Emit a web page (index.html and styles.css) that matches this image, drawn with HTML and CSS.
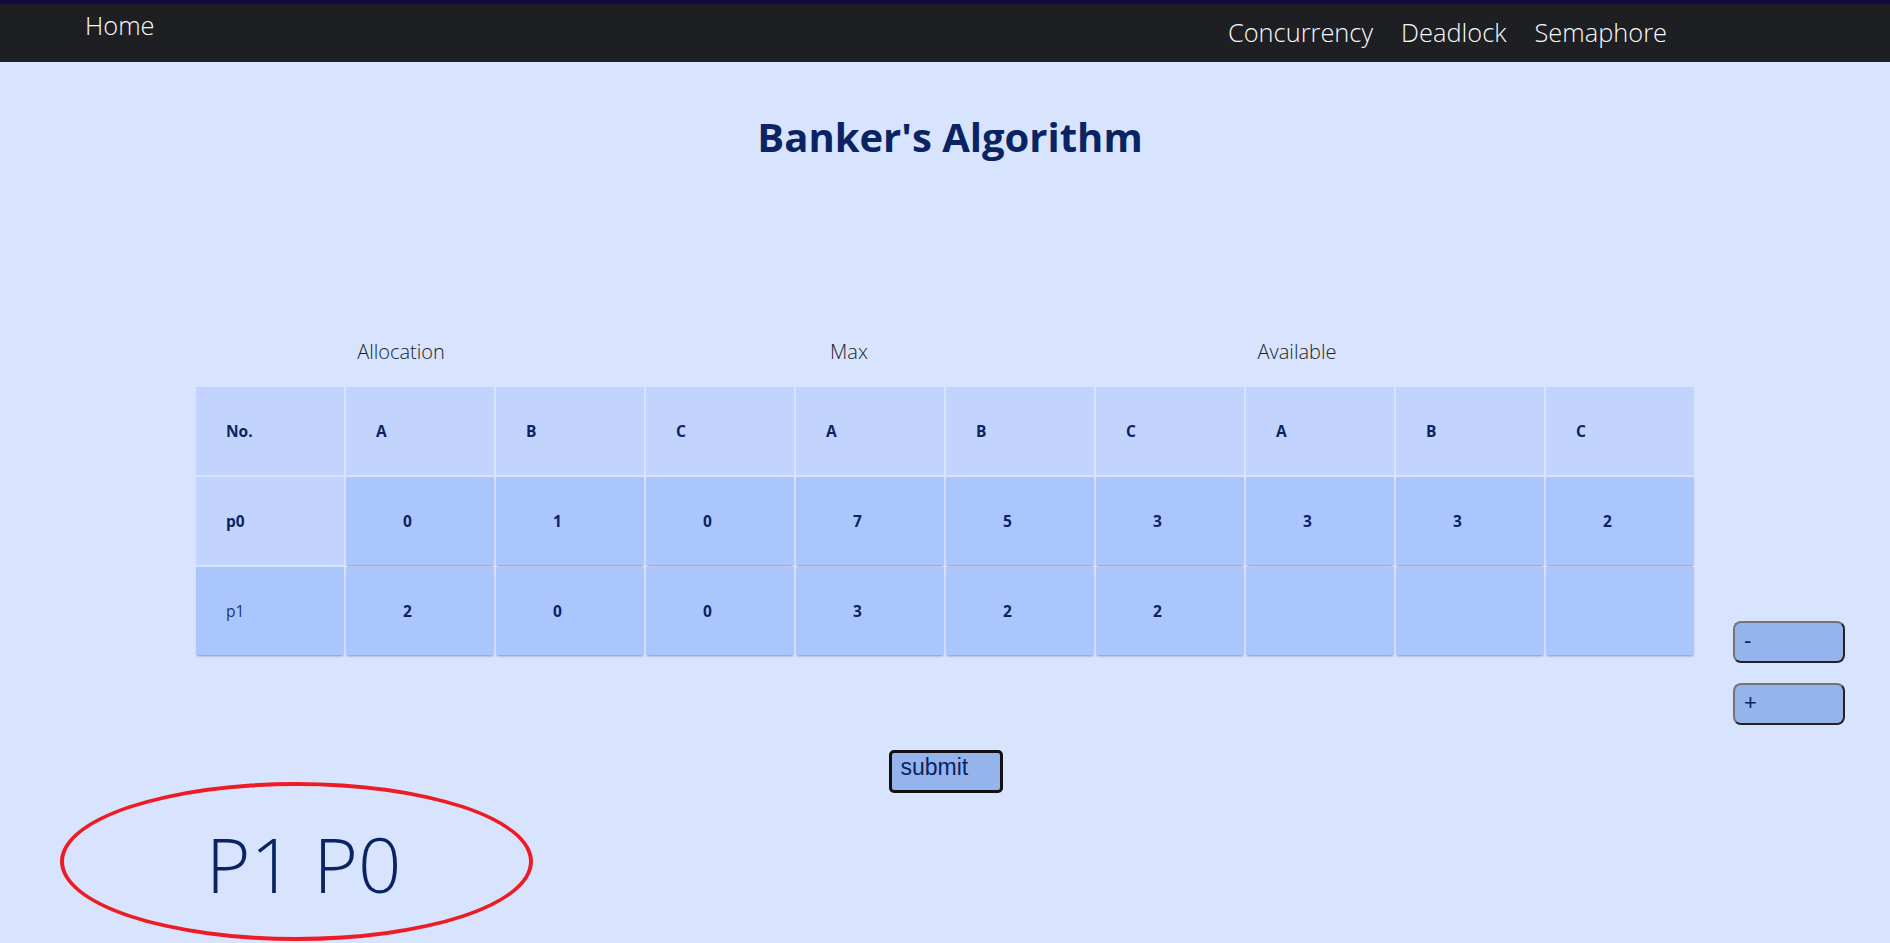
FILE: index.html
```html
<!DOCTYPE html>
<html lang="en">
<head>
<meta charset="utf-8">
<title>Banker's Algorithm</title>
<link rel="stylesheet" href="styles.css">
</head>
<body>
<nav class="navbar">
  <a class="nav-home" href="#">Home</a>
  <div class="nav-links">
    <a href="#">Concurrency</a>
    <a href="#">Deadlock</a>
    <a href="#">Semaphore</a>
  </div>
</nav>

<main>
  <h1 class="title">Banker's Algorithm</h1>

  <div class="group-labels">
    <span>Allocation</span>
    <span>Max</span>
    <span>Available</span>
  </div>

  <div class="table-area">
    <table class="matrix">
      <tr class="head-row">
        <th>No.</th>
        <th>A</th><th>B</th><th>C</th>
        <th>A</th><th>B</th><th>C</th>
        <th>A</th><th>B</th><th>C</th>
      </tr>
      <tr>
        <td class="proc proc-bold">p0</td>
        <td class="val">0</td><td class="val">1</td><td class="val">0</td>
        <td class="val">7</td><td class="val">5</td><td class="val">3</td>
        <td class="val">3</td><td class="val">3</td><td class="val">2</td>
      </tr>
      <tr>
        <td class="proc proc-data">p1</td>
        <td class="val">2</td><td class="val">0</td><td class="val">0</td>
        <td class="val">3</td><td class="val">2</td><td class="val">2</td>
        <td class="val"></td><td class="val"></td><td class="val"></td>
      </tr>
    </table>
    <div class="row-controls">
      <button class="ctrl-btn" type="button">-</button>
      <button class="ctrl-btn" type="button">+</button>
    </div>
  </div>

  <div class="submit-wrap">
    <button class="submit-btn" type="button">submit</button>
  </div>

  <div class="result">
    <span class="result-text">P1 P0</span>
  </div>
</main>
</body>
</html>
```

FILE: styles.css
```css
* {
  box-sizing: border-box;
}

html, body {
  margin: 0;
  padding: 0;
}

body {
  min-height: 100vh;
  background: #d8e3fe;
  font-family: "Open Sans", "Liberation Sans", sans-serif;
  color: #0a2463;
}

/* ---------- navbar ---------- */
.navbar {
  display: flex;
  justify-content: space-between;
  align-items: flex-start;
  height: 62px;
  border-top: 4px solid #140a3e;
  background: #1e1f23;
  padding: 0 223px 0 85px;
}

.navbar a {
  color: #f8f9fa;
  text-decoration: none;
  font-size: 25.4px;
  font-weight: 300;
  line-height: 1.362;
}

.nav-home {
  padding-top: 4px;
}

.nav-links {
  display: flex;
  gap: 28px;
  padding-top: 11px;
}

/* ---------- title ---------- */
.title {
  margin: 48px 0 0;
  text-align: center;
  font-size: 40px;
  font-weight: 700;
  line-height: 54px;
  color: #0a2463;
  padding-left: 10px;
}

/* ---------- group labels ---------- */
.group-labels {
  display: grid;
  grid-template-columns: repeat(3, 448px);
  margin: 174px 0 0 177px;
}

.group-labels span {
  text-align: center;
  font-size: 20px;
  font-weight: 300;
  line-height: 27px;
  color: #1a1f2a;
}

/* ---------- table ---------- */
.table-area {
  display: grid;
  grid-template-columns: 1fr auto 1fr;
  margin-top: 20px;
}

.matrix {
  grid-column: 2;
  border-collapse: separate;
  border-spacing: 2px;
  align-self: start;
}

.matrix th,
.matrix td {
  height: 88px;
  padding: 0 0 0 30px;
  width: 148px;
  text-align: left;
  vertical-align: middle;
  font-size: 15.5px;
  font-weight: 700;
  color: #0a2463;
  background: #c2d4fd;
}

.matrix td.val {
  padding-left: 57px;
  background: #abc6fd;
  box-shadow: 0 2px 2px -1px rgba(40, 50, 80, 0.45);
}

.matrix td.proc-data {
  background: #abc6fd;
  font-weight: 400;
  color: #1d3670;
  box-shadow: 0 2px 2px -1px rgba(40, 50, 80, 0.45);
}

/* ---------- +/- controls ---------- */
.row-controls {
  grid-column: 3;
  display: flex;
  flex-direction: column;
  align-items: flex-start;
  gap: 20px;
  padding: 236px 0 0 37px;
}

.ctrl-btn {
  width: 112px;
  height: 42px;
  padding: 0 0 2px 9px;
  text-align: left;
  font-family: "Liberation Sans", Arial, sans-serif;
  font-size: 22px;
  color: #0a2463;
  background: #96b4ec;
  border: 2px solid;
  border-color: #757575 #232323 #232323 #757575;
  border-radius: 8px;
}

/* ---------- submit ---------- */
.submit-wrap {
  text-align: center;
  margin-top: 25px;
  padding-left: 1px;
}

.submit-btn {
  width: 114px;
  height: 43px;
  padding: 0 0 8px 9px;
  text-align: left;
  font-family: "Liberation Sans", Arial, sans-serif;
  font-size: 23px;
  color: #0a2463;
  background: #96b4ec;
  border: 3px solid #111;
  border-radius: 5px;
}

/* ---------- result ---------- */
.result {
  position: relative;
  margin-top: 18px;
  padding-left: 206px;
  height: 105px;
}

.result::before {
  content: "";
  position: absolute;
  left: 60px;
  top: -29px;
  width: 465px;
  height: 151px;
  border: 4px solid #ed1c24;
  border-radius: 50%;
}

.result-text {
  font-size: 76px;
  font-weight: 300;
  line-height: 105px;
  color: #0a2463;
}
```
